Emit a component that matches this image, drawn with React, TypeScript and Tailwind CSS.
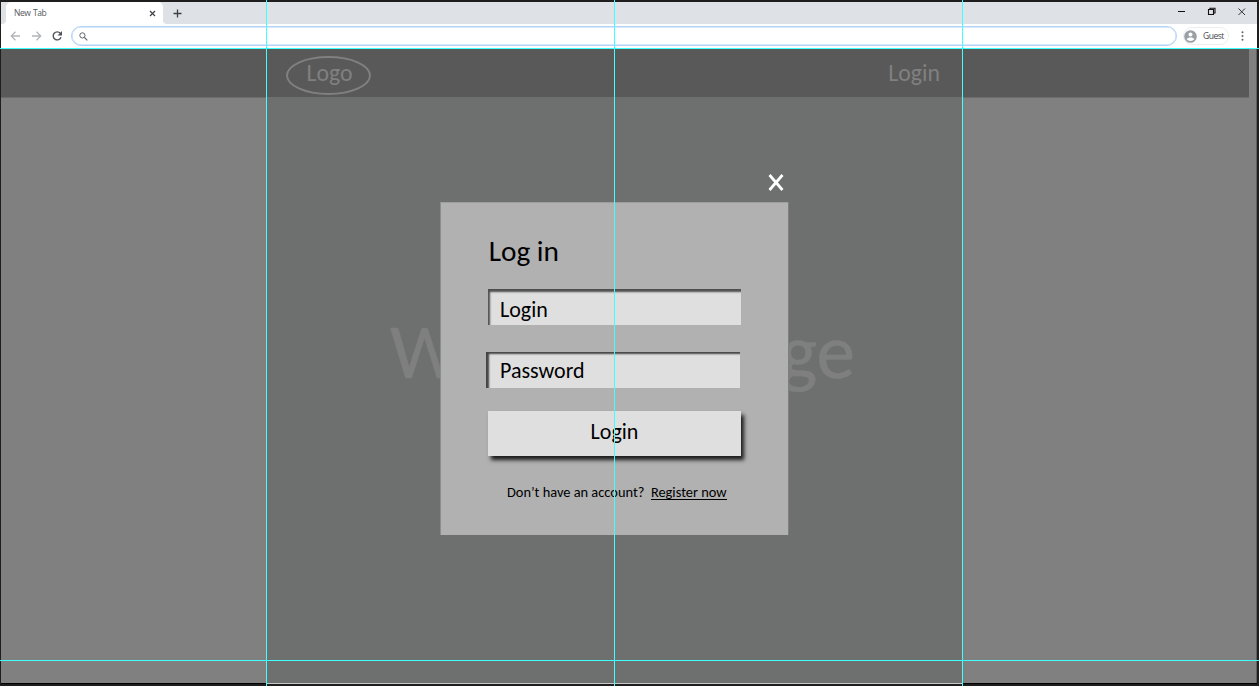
import React from "react";

function TabStrip() {
  return (
    <div className="flex h-[22px] bg-[#dee1e6]">
      <div className="flex w-[5px] bg-white">
        <div className="w-full rounded-br-[4px] bg-[#dee1e6]" />
      </div>
      <div className="flex w-[157px] items-center justify-between rounded-t-[5px] bg-white pl-2 pr-[7px]">
        <span className="text-[8.5px] leading-none tracking-[-0.4px] text-[#55585d] [word-spacing:0.6px]">New Tab</span>
        <svg className="h-[7px] w-[7px]" viewBox="0 0 7 7" stroke="#3c4043" strokeWidth="1.2">
          <path d="M1 1l5 5M6 1L1 6" />
        </svg>
      </div>
      <div className="w-[5px] bg-white">
        <div className="h-full w-full rounded-bl-[4px] bg-[#dee1e6]" />
      </div>
      <svg className="ml-[5px] mt-[7px] h-[9px] w-[9px]" viewBox="0 0 9 9" stroke="#3c4043" strokeWidth="1.3">
        <path d="M4.5 .5v8M.5 4.5h8" />
      </svg>
      <svg className="ml-auto mr-[9px] mt-[4px] h-[11px] w-[70px]" viewBox="0 0 70 11" fill="none" stroke="#111">
        <path d="M0 5.5h7" />
        <path d="M30.500 3.500h5v5h-5zM32 3V2.200h5V7H36" strokeWidth="1.100" />
        <path d="M60.500 2.500l6.500 6.500M67 2.500l-6.500 6.500" stroke="#333" />
      </svg>
    </div>
  );
}

function Toolbar() {
  return (
    <div className="flex h-6 items-center bg-white">
      <svg className="ml-[9px] h-[12px] w-[55px]" viewBox="0 0 55 12" fill="none">
        <g stroke="#b3b5b8" strokeWidth="1.3">
          <path d="M10 6H1.500M5.500 1.800L1.300 6l4.200 4.200" />
          <path d="M22 6h8.500M26.500 1.800L30.700 6l-4.200 4.200" />
        </g>
        <path d="M50.300 3.300A4 4 0 1 0 51 7.200" stroke="#50545a" strokeWidth="1.400" />
        <path d="M52 1v4.500h-4.500z" fill="#50545a" />
      </svg>
      <div className="ml-[6px] flex h-[20px] w-[1106px] items-center rounded-full border-[1.5px] border-[#b2d3f5] pl-[7px] shadow-[inset_0_0_0_0.5px_#b2d3f5]">
        <svg className="h-[9px] w-[9px]" viewBox="0 0 9 9" fill="none" stroke="#5f6368">
          <circle cx="3.400" cy="3.400" r="2.600" />
          <path d="M5.400 5.400L8.300 8.300" strokeWidth="1.200" />
        </svg>
      </div>
      <div className="ml-[6px] flex h-[18px] w-[46px] items-center rounded-full border border-[#eceef0]">
        <svg className="h-[13px] w-[13px]" viewBox="0 0 13 13">
          <circle cx="6.500" cy="6.500" r="6.300" fill="#9aa0a6" />
          <circle cx="6.500" cy="4.600" r="2" fill="#fff" />
          <path d="M2.700 9.300c.8-2.300 6.800-2.300 7.600 0c-1.900 2.300-5.700 2.300-7.600 0z" fill="#fff" />
        </svg>
        <span className="ml-[6px] text-[8.5px] leading-none tracking-[-0.5px] text-[#45494f]">Guest</span>
      </div>
      <svg className="ml-[12px] h-[10px] w-[3px]" viewBox="0 0 3 10" fill="#5f6368">
        <circle cx="1.500" cy="1.300" r="1" />
        <circle cx="1.500" cy="5" r="1" />
        <circle cx="1.500" cy="8.700" r="1" />
      </svg>
    </div>
  );
}

function SiteHeader() {
  return (
    <header className="mr-[7px] flex h-[49px] items-center justify-between bg-[#595959] pl-[285px] pr-[309px] font-[Carlito,Lato,sans-serif] text-[23.8px] text-[#808080] shadow-[0_1px_0_#6c6c6c]">
      <div className="mt-[5px] flex h-[39px] w-[85px] items-center justify-center rounded-[50%] border-2 border-[#808080]">
        <span className="-mt-[5px] ml-[2px]">Logo</span>
      </div>
      <span>Login</span>
    </header>
  );
}

const fieldClass =
  "h-[36px] bg-[#dfdfdf] text-[22px] text-black placeholder:text-black placeholder:opacity-100 outline-none";

function LoginDialog() {
  return (
    <div className="absolute left-[440px] top-[173px] w-[348px] font-[Carlito,Lato,sans-serif] text-black">
      <div className="flex h-[29px] justify-end pr-[4px]">
        <svg className="h-[19px] w-[16px]" viewBox="0 0 16 19" stroke="#fff" strokeWidth="2.700" fill="none">
          <path d="M1.500 2L14.500 17M14.500 2L1.500 17" />
        </svg>
      </div>
      <form className="flex h-[333px] flex-col border-l border-t border-l-[#8c8d8d] border-t-[#9e9e9e] bg-[#b1b1b1] pl-[47px] shadow-[1px_0_0_#7e8080]">
        <h1 className="mt-[31px] h-[34px] pl-[0.7px] text-[29.3px] leading-[34px]">Log in</h1>
        <input
          className={`mt-[21px] w-[253px] pl-[12px] pt-[4px] shadow-[inset_2px_3px_2px_rgba(0,0,0,0.65)] ${fieldClass}`}
          placeholder="Login"
        />
        <input
          className={`-ml-[2px] mt-[27px] w-[254px] pl-[14px] shadow-[inset_3px_2px_2px_rgba(0,0,0,0.7)] ${fieldClass}`}
          placeholder="Password"
        />
        <button
          type="button"
          className="mt-[23px] h-[45px] w-[253px] bg-[#dfdfdf] pb-[4px] text-[22px] shadow-[3px_4px_4px_rgba(0,0,0,0.85)]"
        >
          Login
        </button>
        <p className="mt-[28px] flex gap-[6.5px] pl-[19px] text-[14.4px] leading-[17px]">
          <span>Don’t have an account?</span>
          <a className="h-[16px] border-b border-black">Register now</a>
        </p>
      </form>
    </div>
  );
}

function Guides() {
  return (
    <div className="pointer-events-none absolute inset-0">
      <div className="absolute left-[266px] h-full w-px bg-[#40ffff]" />
      <div className="absolute left-[614px] h-full w-px bg-[#40ffff]" />
      <div className="absolute left-[962px] h-full w-px bg-[#40ffff]" />
      <div className="absolute top-[48px] h-px w-full bg-[#40ffff]" />
      <div className="absolute top-[660px] h-px w-full bg-[#40ffff]" />
    </div>
  );
}

export default function App() {
  return (
    <div className="relative flex h-[686px] w-[1259px] flex-col overflow-hidden bg-[#1e1e1e] pl-px pr-[2px] pt-[2px] font-['Open_Sans',sans-serif]">
      <TabStrip />
      <Toolbar />
      <div className="flex h-[635px] flex-col border-r border-[#606060] bg-[#808080]">
        <SiteHeader />
        <main className="ml-[265px] flex h-[586px] w-[696px] justify-center bg-[#6d706f] pl-[17px] pt-[210px]">
          <span className="whitespace-nowrap font-[Carlito,Lato,sans-serif] text-[77.4px] leading-[90px] text-[#7f7f7f] [-webkit-text-stroke:0.5px_#7f7f7f]">
            Welcome page
          </span>
        </main>
      </div>
      <div className="flex h-px bg-black">
        <div className="ml-[265px] w-[696px] bg-[#c8c8c8]" />
      </div>
      <LoginDialog />
      <Guides />
    </div>
  );
}
